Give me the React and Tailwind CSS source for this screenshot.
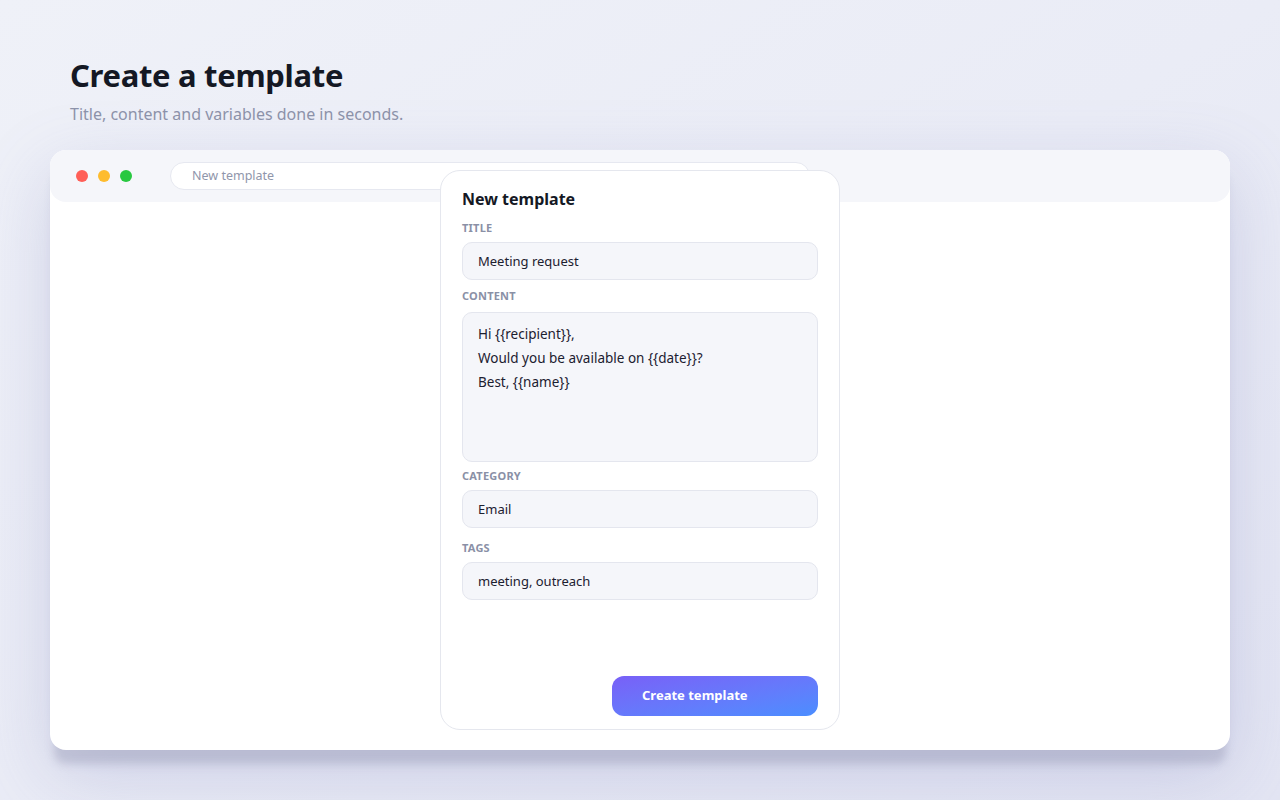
import React from 'react';

const fields = [
  { label: 'Title', value: 'Meeting request', labelMt: 'mt-[9px]' },
  { label: 'Category', value: 'Email', labelMt: 'mt-[6px]' },
  { label: 'Tags', value: 'meeting, outreach', labelMt: 'mt-[12px]' },
];

function Label({ children, className = '' }) {
  return (
    <div className={`text-[11px] leading-4 font-bold uppercase tracking-[0.02em] text-[#8a90a6] ${className}`}>
      {children}
    </div>
  );
}

function Field({ label, value, labelMt }) {
  return (
    <>
      <Label className={labelMt}>{label}</Label>
      <div className="mt-[6px] h-[38px] rounded-[10px] border border-[#e4e6ee] bg-[#f5f6fa] px-[15px] pt-[1px] flex items-center text-[13px] text-[#1c2030]">
        {value}
      </div>
    </>
  );
}

export default function App() {
  return (
    <div
      className="min-h-screen w-full bg-gradient-to-br from-[#eff1f8] via-[#eaecf6] to-[#e3e5f3] px-[50px] pt-[55px] pb-[50px]"
      style={{ fontFamily: '"Noto Sans", "Open Sans", sans-serif' }}
    >
      {/* HEADER */}
      <div className="px-[20px]">
        <h1 className="text-[31px] leading-[40px] font-bold text-[#141824] tracking-[-0.01em]">Create a template</h1>
        <p className="mt-[7px] text-[16px] leading-6 text-[#8d93aa]">Title, content and variables done in seconds.</p>
      </div>

      {/* BROWSER WINDOW */}
      <div className="relative mt-[24px] h-[600px] rounded-[16px] bg-white shadow-[0_18px_8px_-4px_rgba(155,157,185,0.45),0_24px_70px_rgba(115,120,185,0.25)]">
        <div className="h-[52px] rounded-[16px] bg-[#f5f6fa] flex items-center pl-[26px]">
          <div className="flex gap-[10px]">
            <span className="w-[12px] h-[12px] rounded-full bg-[#ff5f57]" />
            <span className="w-[12px] h-[12px] rounded-full bg-[#febc2e]" />
            <span className="w-[12px] h-[12px] rounded-full bg-[#28c840]" />
          </div>
          <div className="ml-[38px] w-[640px] h-[28px] rounded-full bg-white border border-[#e6e8f0] flex items-center pl-[21px] text-[12.5px] text-[#9096ab]">
            New template
          </div>
        </div>

        {/* DIALOG */}
        <div className="absolute top-[20px] left-1/2 -translate-x-1/2 w-[400px] h-[560px] rounded-[20px] border border-[#e5e7ee] bg-white px-[21px] pt-[16px] pb-[13px] flex flex-col">
          <h2 className="text-[16px] leading-6 font-bold text-[#141824]">New template</h2>

          <Field {...fields[0]} />

          <Label className="mt-[8px]">Content</Label>
          <div className="mt-[8px] h-[150px] rounded-[10px] border border-[#e4e6ee] bg-[#f5f6fa] px-[15px] pt-[9px] text-[13.5px] leading-6 text-[#1c2030]">
            <div>Hi {'{{recipient}}'},</div>
            <div>Would you be available on {'{{date}}'}?</div>
            <div>Best, {'{{name}}'}</div>
          </div>

          <Field {...fields[1]} />
          <Field {...fields[2]} />

          <div className="mt-auto flex justify-end">
            <button className="w-[206px] h-[40px] rounded-[12px] bg-gradient-to-br from-[#7860f7] to-[#4a8eff] text-white text-[13px] font-bold text-left pl-[30px]">
              Create template
            </button>
          </div>
        </div>
      </div>
    </div>
  );
}
